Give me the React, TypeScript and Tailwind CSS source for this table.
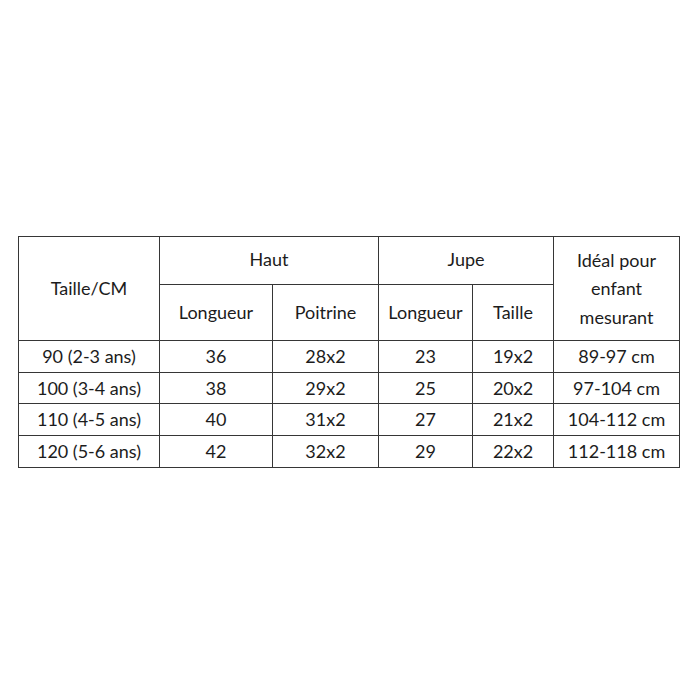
const rows = [
  ['90 (2-3 ans)', '36', '28x2', '23', '19x2', '89-97 cm'],
  ['100 (3-4 ans)', '38', '29x2', '25', '20x2', '97-104 cm'],
  ['110 (4-5 ans)', '40', '31x2', '27', '21x2', '104-112 cm'],
  ['120 (5-6 ans)', '42', '32x2', '29', '22x2', '112-118 cm'],
];

const cell = 'border-[1.5px] border-[#363636] text-center align-middle p-0';

export default function App() {
  return (
    <div className="w-[700px] h-[700px] bg-white pt-[236px] pl-[18px] font-['Lato','Open_Sans',sans-serif] text-[18px] text-[#1c1c1c]">
      <table className="border-collapse table-fixed w-[661px]">
        <colgroup>
          <col className="w-[141px]" />
          <col className="w-[113px]" />
          <col className="w-[106px]" />
          <col className="w-[94px]" />
          <col className="w-[81px]" />
          <col className="w-[126px]" />
        </colgroup>
        <thead>
          <tr className="h-[48px]">
            <th rowSpan={2} className={`${cell} font-normal`}>Taille/CM</th>
            <th colSpan={2} className={`${cell} font-normal pb-[2px]`}>Haut</th>
            <th colSpan={2} className={`${cell} font-normal pb-[2px]`}>Jupe</th>
            <th rowSpan={2} className={`${cell} font-normal leading-[28.5px]`}>
              Idéal pour
              <br />
              enfant
              <br />
              mesurant
            </th>
          </tr>
          <tr className="h-[56px]">
            <th className={`${cell} font-normal`}>Longueur</th>
            <th className={`${cell} font-normal`}>Poitrine</th>
            <th className={`${cell} font-normal`}>Longueur</th>
            <th className={`${cell} font-normal`}>Taille</th>
          </tr>
        </thead>
        <tbody>
          {rows.map((r) => (
            <tr key={r[0]} className="h-[31.7px]">
              {r.map((v, i) => (
                <td key={i} className={cell}>
                  {v}
                </td>
              ))}
            </tr>
          ))}
        </tbody>
      </table>
    </div>
  );
}
